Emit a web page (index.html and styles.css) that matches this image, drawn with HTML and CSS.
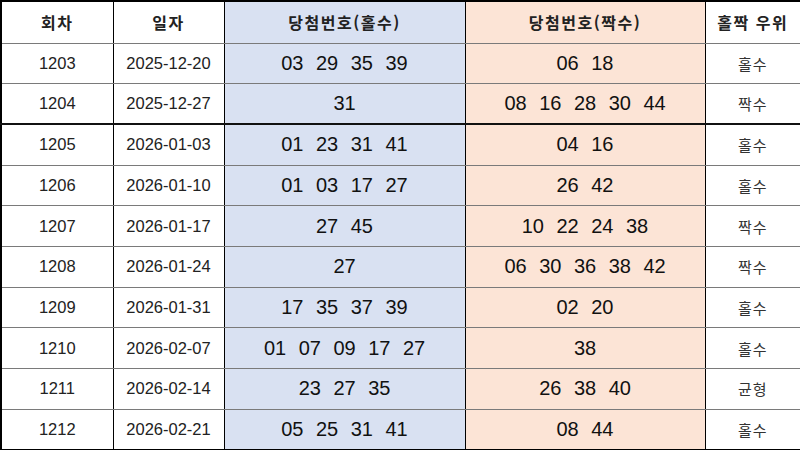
FILE: index.html
```html
<!DOCTYPE html>
<html lang="ko">
<head>
<meta charset="utf-8">
<title>홀짝 우위</title>
<link rel="stylesheet" href="styles.css">
</head>
<body>
<table class="lotto">
  <colgroup>
    <col class="c-round"><col class="c-date"><col class="c-odd"><col class="c-even"><col class="c-lead">
  </colgroup>
  <thead>
    <tr>
      <th>회차</th>
      <th>일자</th>
      <th class="odd">당첨번호(홀수)</th>
      <th class="even">당첨번호(짝수)</th>
      <th>홀짝 우위</th>
    </tr>
  </thead>
  <tbody>
    <tr>
      <td class="num">1203</td><td class="num">2025-12-20</td>
      <td class="odd"><div class="balls"><span>03</span><span>29</span><span>35</span><span>39</span></div></td>
      <td class="even"><div class="balls"><span>06</span><span>18</span></div></td>
      <td class="lead">홀수</td>
    </tr>
    <tr class="split">
      <td class="num">1204</td><td class="num">2025-12-27</td>
      <td class="odd"><div class="balls"><span>31</span></div></td>
      <td class="even"><div class="balls"><span>08</span><span>16</span><span>28</span><span>30</span><span>44</span></div></td>
      <td class="lead">짝수</td>
    </tr>
    <tr>
      <td class="num">1205</td><td class="num">2026-01-03</td>
      <td class="odd"><div class="balls"><span>01</span><span>23</span><span>31</span><span>41</span></div></td>
      <td class="even"><div class="balls"><span>04</span><span>16</span></div></td>
      <td class="lead">홀수</td>
    </tr>
    <tr>
      <td class="num">1206</td><td class="num">2026-01-10</td>
      <td class="odd"><div class="balls"><span>01</span><span>03</span><span>17</span><span>27</span></div></td>
      <td class="even"><div class="balls"><span>26</span><span>42</span></div></td>
      <td class="lead">홀수</td>
    </tr>
    <tr>
      <td class="num">1207</td><td class="num">2026-01-17</td>
      <td class="odd"><div class="balls"><span>27</span><span>45</span></div></td>
      <td class="even"><div class="balls"><span>10</span><span>22</span><span>24</span><span>38</span></div></td>
      <td class="lead">짝수</td>
    </tr>
    <tr>
      <td class="num">1208</td><td class="num">2026-01-24</td>
      <td class="odd"><div class="balls"><span>27</span></div></td>
      <td class="even"><div class="balls"><span>06</span><span>30</span><span>36</span><span>38</span><span>42</span></div></td>
      <td class="lead">짝수</td>
    </tr>
    <tr>
      <td class="num">1209</td><td class="num">2026-01-31</td>
      <td class="odd"><div class="balls"><span>17</span><span>35</span><span>37</span><span>39</span></div></td>
      <td class="even"><div class="balls"><span>02</span><span>20</span></div></td>
      <td class="lead">홀수</td>
    </tr>
    <tr>
      <td class="num">1210</td><td class="num">2026-02-07</td>
      <td class="odd"><div class="balls"><span>01</span><span>07</span><span>09</span><span>17</span><span>27</span></div></td>
      <td class="even"><div class="balls"><span>38</span></div></td>
      <td class="lead">홀수</td>
    </tr>
    <tr>
      <td class="num">1211</td><td class="num">2026-02-14</td>
      <td class="odd"><div class="balls"><span>23</span><span>27</span><span>35</span></div></td>
      <td class="even"><div class="balls"><span>26</span><span>38</span><span>40</span></div></td>
      <td class="lead">균형</td>
    </tr>
    <tr>
      <td class="num">1212</td><td class="num">2026-02-21</td>
      <td class="odd"><div class="balls"><span>05</span><span>25</span><span>31</span><span>41</span></div></td>
      <td class="even"><div class="balls"><span>08</span><span>44</span></div></td>
      <td class="lead">홀수</td>
    </tr>
  </tbody>
</table>
</body>
</html>
```

FILE: styles.css
```css
html, body {
  margin: 0;
  padding: 0;
  background: #ffffff;
}

.lotto {
  width: 800px;
  height: 450px;
  border-collapse: collapse;
  table-layout: fixed;
  border: 2px solid #000;
  font-family: "Liberation Sans", Arial, "Noto Sans CJK KR", sans-serif;
  color: #111;
}

.c-round { width: 112px; }
.c-date { width: 111px; }
.c-odd { width: 241px; }
.c-even { width: 240px; }
.c-lead { width: 96px; }

.lotto th,
.lotto td {
  padding: 0;
  text-align: center;
  vertical-align: middle;
  border-left: 1px solid #000;
  border-right: 1px solid #000;
  border-top: 1px solid #7a7a7a;
  border-bottom: 1px solid #7a7a7a;
}

.lotto thead tr {
  height: 42px;
}

.lotto th {
  font-family: "Noto Sans CJK KR", sans-serif;
  font-weight: 700;
  font-size: 16px;
  letter-spacing: 1.5px;
  color: #222;
}

.lotto tbody tr {
  height: 40.7px;
}

.lotto tr.split td {
  border-bottom: 2px solid #111;
}

.num {
  font-size: 16.5px;
  color: #222;
}

.odd {
  background: #d9e1f2;
}

.even {
  background: #fce4d6;
}

.balls {
  display: flex;
  justify-content: center;
  gap: 12.5px;
  font-size: 20px;
  color: #111;
}

.lead {
  font-family: "Noto Sans CJK KR", sans-serif;
  font-size: 15px;
  letter-spacing: 1px;
  color: #333;
}
```
